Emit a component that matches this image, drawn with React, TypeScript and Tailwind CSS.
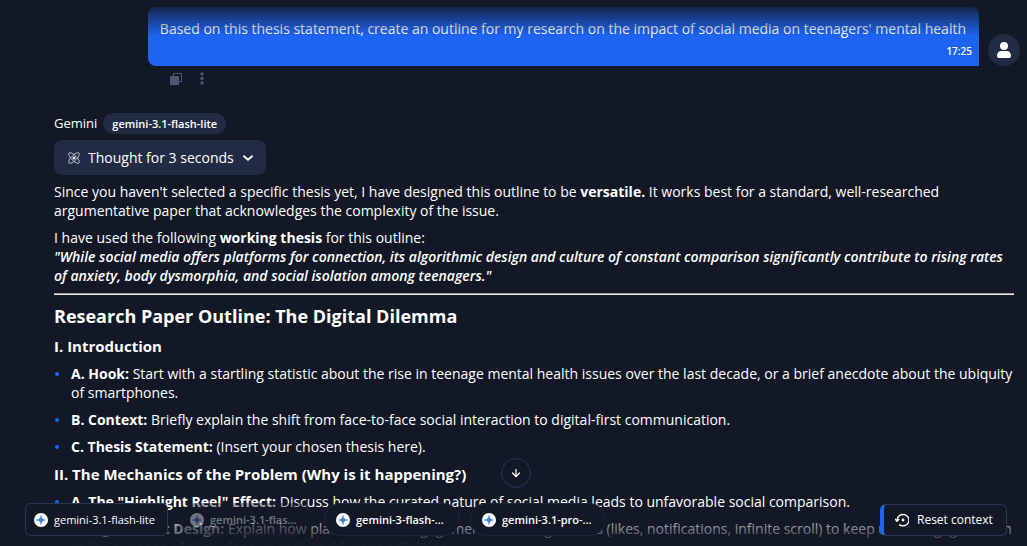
import { ArrowDown, ChevronDown } from "lucide-react";
import type { ReactNode } from "react";

function Spark({ id }: { id: string }) {
  return (
    <svg viewBox="0 0 14 14" className="size-[14px] shrink-0" aria-hidden="true">
      <defs>
        <linearGradient id={id} x1="0" y1="1" x2="1" y2="0">
          <stop offset="0" stopColor="#1e88e5" />
          <stop offset="0.5" stopColor="#3f7fd6" />
          <stop offset="1" stopColor="#7472c9" />
        </linearGradient>
      </defs>
      <circle cx="7" cy="7" r="7" fill="#fff" />
      <path d="M7 2.6C7.4 5.2 8.8 6.6 11.4 7C8.8 7.4 7.4 8.8 7 11.4C6.6 8.8 5.2 7.4 2.6 7C5.2 6.6 6.6 5.2 7 2.6Z" fill={`url(#${id})`} stroke={`url(#${id})`} strokeWidth="0.6" />
    </svg>
  );
}

function AtomIcon() {
  return (
    <svg viewBox="0 0 12 12" className="size-3" fill="none" stroke="#d5d8e2" strokeWidth="0.8" aria-hidden="true">
      <ellipse cx="6" cy="6" rx="7" ry="2.6" transform="rotate(45 6 6)" />
      <ellipse cx="6" cy="6" rx="7" ry="2.6" transform="rotate(-45 6 6)" />
      <circle cx="6" cy="6" r="1.2" fill="#fff" />
    </svg>
  );
}

function Item({ title, children }: { title: string; children: ReactNode }) {
  return (
    <li className="flex gap-3">
      <span className="mt-2 ml-[1px] size-1 shrink-0 rounded-full bg-[#1d64f2]" />
      <p>
        <strong className="font-bold">{title}</strong> {children}
      </p>
    </li>
  );
}

const models = [
  { name: "gemini-3.1-flas...", muted: true },
  { name: "gemini-3-flash-...", muted: false },
  { name: "gemini-3.1-pro-...", muted: false },
];

export default function App() {
  return (
    <div className="relative h-screen overflow-hidden bg-[#121825] font-['Open_Sans','Noto_Sans',sans-serif] text-sm leading-[19px] text-white">
      <main>
        <section className="flex items-end justify-end gap-[9px] pt-[7px] pr-[7px]">
          <div className="flex h-[59px] flex-col justify-between rounded-lg rounded-br-none bg-[#1d64f2] pt-3 pr-[7px] pb-[7px] pl-3">
            <p className="pr-[6px]">
              Based on this thesis statement, create an outline for my research on the impact of social media on teenagers' mental health
            </p>
            <time className="self-end text-[10px] leading-4 font-semibold">17:25</time>
          </div>
          <div className="flex size-8 shrink-0 items-center justify-center rounded-full bg-[#212b44]">
            <svg viewBox="0 0 14 16" className="h-4 w-[14px]" fill="#fff" aria-label="You">
              <circle cx="7" cy="4" r="4" />
              <path d="M0 13.5C0 10.8 2 9 4 9H10C12 9 14 10.8 14 13.5C14 15 13.3 16 12 16H2C.7 16 0 15 0 13.5Z" />
            </svg>
          </div>
        </section>

        <div className="mt-[6px] ml-[170px] flex items-center gap-[18px]">
          <button type="button" aria-label="Copy" className="block">
            <svg viewBox="0 0 12 12" className="size-3" aria-hidden="true">
              <path d="M3.5 3V.5H11.5V8.5H9" fill="none" stroke="#4d5771" />
              <rect y="3" width="9" height="9" fill="#4d5771" />
            </svg>
          </button>
          <button type="button" aria-label="More" className="block">
            <svg viewBox="0 0 4 13" className="h-[13px] w-1" fill="#4d5771" aria-hidden="true">
              <circle cx="2" cy="2" r="1.7" />
              <circle cx="2" cy="6.5" r="1.7" />
              <circle cx="2" cy="11" r="1.7" />
            </svg>
          </button>
        </div>

        <article className="mt-[28px] mr-[13px] ml-[54px]">
          <header className="flex items-center gap-[6px]">
            <span className="text-[13px]">Gemini</span>
            <span className="rounded-full bg-[#212b44] px-[9px] text-[11px] leading-[21px] font-semibold">gemini-3.1-flash-lite</span>
          </header>
          <button type="button" className="mt-[6px] flex h-[35px] items-center gap-2 rounded-lg bg-[#212b44] px-3 pl-[14px]">
            <AtomIcon />
            <span>Thought for 3 seconds</span>
            <svg viewBox="0 0 12 12" className="size-3" fill="none" stroke="#fff" strokeWidth="2" strokeLinecap="round" strokeLinejoin="round" aria-hidden="true">
              <path d="M2 4.2L6 7.8L10 4.2" />
            </svg>
          </button>
          <p className="mt-[7px]">
            Since you haven't selected a specific thesis yet, I have designed this outline to be <strong>versatile.</strong> It works best for a standard, well-researched argumentative paper that acknowledges the complexity of the issue.
          </p>
          <p className="mt-2">
            I have used the following <strong>working thesis</strong> for this outline:
            <br />
            <strong className="font-semibold italic">
              "While social media offers platforms for connection, its algorithmic design and culture of constant comparison significantly contribute to rising rates of anxiety, body dysmorphia, and social isolation among teenagers."
            </strong>
          </p>
          <hr className="mt-2 h-[2px] border-t border-[#9a9a9a] bg-[#eeeeee]" />
          <h2 className="mt-[9px] text-lg leading-6 font-bold">Research Paper Outline: The Digital Dilemma</h2>
          <h3 className="mt-2 text-[15px] leading-5 font-bold">I. Introduction</h3>
          <ul className="mt-2 flex flex-col gap-2">
            <Item title="A. Hook:">
              Start with a startling statistic about the rise in teenage mental health issues over the last decade, or a brief anecdote about the ubiquity of smartphones.
            </Item>
            <Item title="B. Context:">Briefly explain the shift from face-to-face social interaction to digital-first communication.</Item>
            <Item title="C. Thesis Statement:">(Insert your chosen thesis here).</Item>
          </ul>
          <h3 className="mt-2 text-[15px] leading-5 font-bold">II. The Mechanics of the Problem (Why is it happening?)</h3>
          <ul className="mt-2 flex flex-col gap-2">
            <Item title={'A. The "Highlight Reel" Effect:'}>Discuss how the curated nature of social media leads to unfavorable social comparison.</Item>
            <Item title="B. Algorithmic Design:">
              Explain how platforms use engagement-based algorithms (likes, notifications, infinite scroll) to keep users engaged, even at the expense of their sleep or real-world responsibilities.
            </Item>
          </ul>
        </article>
      </main>

      <div className="pointer-events-none absolute inset-x-0 top-0 h-9 bg-linear-to-b from-[#121825] to-transparent" />
      <div className="pointer-events-none absolute inset-x-0 bottom-0 h-9 bg-linear-to-t from-[#121825] to-transparent" />

      <footer className="absolute inset-x-0 bottom-[10px] flex items-center justify-between pr-5 pl-[25px] text-[11px]">
        <div className="flex items-center gap-[10px]">
          <button type="button" className="flex h-[33px] w-[143px] items-center gap-[6px] rounded-md border border-[#2b3656] bg-[#121825] px-2 font-medium">
            <Spark id="spark-active" />
            <span className="whitespace-nowrap">gemini-3.1-flash-lite</span>
          </button>
          {models.map((m, i) => (
            <button
              key={m.name}
              type="button"
              disabled={m.muted}
              className="flex h-[33px] w-[136px] items-center gap-[6px] rounded-full border border-[#1c2540] bg-[#121825] px-[11px] font-semibold disabled:opacity-40"
            >
              <Spark id={`spark-${i}`} />
              <span className="whitespace-nowrap">{m.name}</span>
            </button>
          ))}
        </div>
        <button type="button" className="flex h-8 w-[127px] items-center gap-2 rounded-md border border-l-4 border-[#2b3656] border-l-[#1d64f2] bg-[#121825] pl-[11px] text-xs font-medium">
          <svg viewBox="0 0 14 14" className="size-[14px]" fill="none" stroke="#fff" strokeWidth="1.4" aria-hidden="true">
            <path d="M2 7A6 5.7 0 1 1 4.2 11.6" />
            <path d="M0 6L2 8.2L4.2 6" />
            <circle cx="8" cy="7" r="0.7" fill="#fff" />
          </svg>
          <span className="whitespace-nowrap">Reset context</span>
        </button>
      </footer>
      <button
        type="button"
        aria-label="Scroll to bottom"
        className="absolute bottom-[58px] left-1/2 ml-[-13px] flex size-[30px] items-center justify-center rounded-full border border-[#2b3656] bg-[#121825]"
      >
        <ArrowDown className="size-3" strokeWidth={2.5} />
      </button>
    </div>
  );
}
